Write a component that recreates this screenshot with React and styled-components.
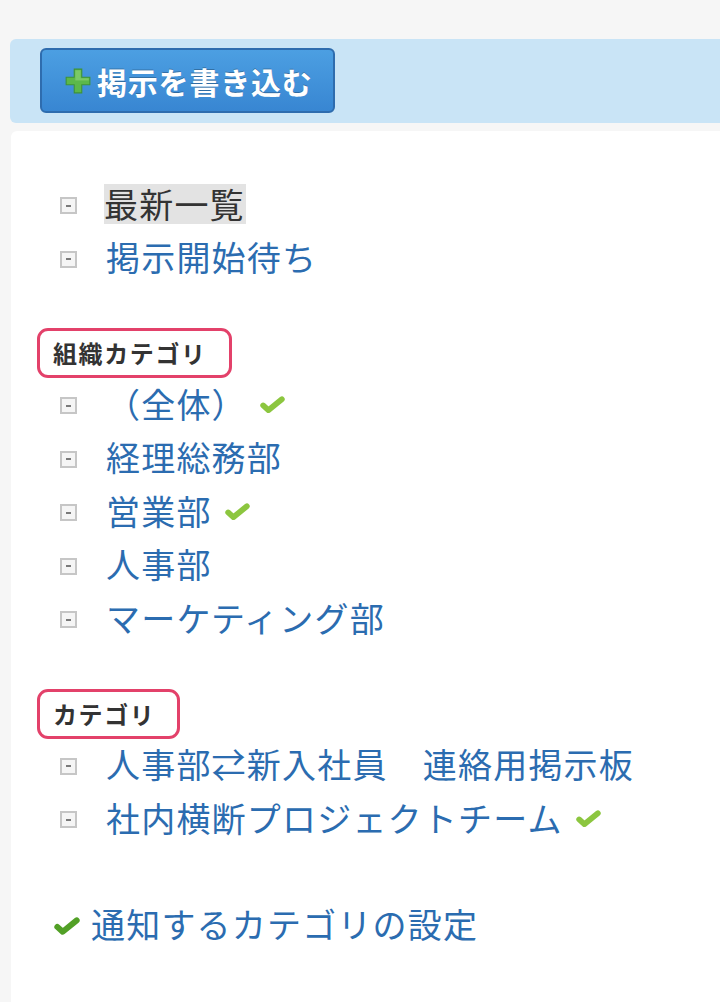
import styled, { createGlobalStyle } from 'styled-components';

const GlobalStyle = createGlobalStyle`
  html, body {
    margin: 0;
    padding: 0;
    background: #f6f6f6;
  }
  body {
    font-family: 'Noto Sans CJK JP', 'Noto Sans', sans-serif;
  }
`;

const orgCategories = [
  { name: '（全体）', checked: true },
  { name: '経理総務部' },
  { name: '営業部', checked: true },
  { name: '人事部' },
  { name: 'マーケティング部' },
];

const categories = [
  { name: '人事部⇄新入社員　連絡用掲示板' },
  { name: '社内横断プロジェクトチーム', checked: true },
];

const PlusIcon = () => (
  <svg width="28" height="28" viewBox="0 0 26 26">
    <path
      d="M9.5 2h7v7.5H24v7h-7.5V24h-7v-7.5H2v-7h7.5z"
      fill="#5cb84a"
      stroke="#3f9434"
      strokeWidth="1"
    />
    <path d="M10.5 3h5v7.5H23v2H10.5z" fill="#8fd47a" opacity="0.6" />
  </svg>
);

const Check = ({ size = 26, color = '#8cc63f' }) => (
  <svg width={size} height={size * 0.7} viewBox="0 0 26 18">
    <path
      d="M4 10l5 4.5L22 4"
      fill="none"
      stroke={color}
      strokeWidth="5.5"
      strokeLinecap="round"
      strokeLinejoin="round"
    />
  </svg>
);

const App = () => {
  return (
    <>
      <GlobalStyle />
      <Toolbar>
        <PostButton>
          <PlusIcon />
          <span>掲示を書き込む</span>
        </PostButton>
      </Toolbar>
      <Panel>
        <List>
          <Item>
            <Bullet />
            <Current>最新一覧</Current>
          </Item>
          <Item>
            <Bullet />
            <Link>掲示開始待ち</Link>
          </Item>
        </List>

        <Heading>組織カテゴリ</Heading>
        <List>
          {orgCategories.map((c) => (
            <Item key={c.name}>
              <Bullet />
              <Link>{c.name}</Link>
              {c.checked && (
                <CheckWrap>
                  <Check size={27} />
                </CheckWrap>
              )}
            </Item>
          ))}
        </List>

        <Heading>カテゴリ</Heading>
        <List>
          {categories.map((c) => (
            <Item key={c.name}>
              <Bullet />
              <Link>{c.name}</Link>
              {c.checked && (
                <CheckWrap>
                  <Check size={27} />
                </CheckWrap>
              )}
            </Item>
          ))}
        </List>

        <Settings>
          <Check size={28} color="#52a026" />
          <Link>通知するカテゴリの設定</Link>
        </Settings>
      </Panel>
    </>
  );
};

const Toolbar = styled.div`
  margin: 39px 0 0 10px;
  height: 84px;
  background: #c9e4f6;
  border-radius: 6px 0 0 6px;
  display: flex;
  align-items: flex-start;
  padding: 9px 0 0 30px;
  box-sizing: border-box;
`;

const PostButton = styled.button`
  width: 295px;
  height: 65px;
  display: flex;
  align-items: center;
  gap: 5px;
  padding: 0 0 0 22px;
  box-sizing: border-box;
  background: linear-gradient(#4c9fe2, #3886d2);
  border: 2px solid #2e6cae;
  border-radius: 6px;
  color: #fff;
  font-family: 'Noto Sans CJK JP', sans-serif;
  font-size: 30px;
  font-weight: 700;
  letter-spacing: 0.8px;
  text-shadow: 0 -1px 0 rgba(0, 0, 0, 0.25);
  cursor: pointer;

  svg {
    flex: none;
  }
`;

const Panel = styled.div`
  margin: 8px 0 0 11px;
  background: #fff;
  border-radius: 6px 0 0 0;
  padding: 46px 0 60px 0;
  min-height: 820px;
  box-sizing: border-box;
`;

const List = styled.ul`
  list-style: none;
  margin: 0;
  padding: 0 0 0 49px;
`;

const Item = styled.li`
  height: 53.5px;
  display: flex;
  align-items: center;
`;

const Bullet = styled.span`
  position: relative;
  flex: none;
  width: 17px;
  height: 17px;
  box-sizing: border-box;
  border: 2px solid #c6c6c6;
  background: #f5f5f5;
  margin: 4px 29px 0 0;

  &::after {
    content: '';
    position: absolute;
    left: 4px;
    top: 5.5px;
    width: 5px;
    height: 2px;
    background: #7a7a7a;
  }
`;

const Link = styled.span`
  color: #2b6cb0;
  font-size: 34px;
  letter-spacing: 1.2px;
  line-height: 1;
  white-space: nowrap;
  cursor: pointer;
`;

const Current = styled.span`
  color: #333;
  font-size: 34px;
  letter-spacing: 1.2px;
  line-height: 1;
  background: #e3e3e3;
  padding: 3px 1px 3px 0;
  margin-left: -2px;
`;

const CheckWrap = styled.span`
  display: inline-flex;
  margin: 2px 0 0 12px;
`;

const Heading = styled.h3`
  display: inline-block;
  margin: 44px 0 0 26px;
  padding: 0 22px 0 13px;
  height: 50px;
  line-height: 44px;
  box-sizing: border-box;
  border: 3px solid #e3416a;
  border-radius: 11px;
  color: #333;
  font-size: 24px;
  font-weight: 700;
  letter-spacing: 1.6px;

  & + ul {
    margin-top: -1px;
  }
`;

const Settings = styled.div`
  margin: 53px 0 0 42px;
  height: 53px;
  display: flex;
  align-items: center;
  gap: 10px;

  svg {
    margin-top: 4px;
  }
`;

export default App;
